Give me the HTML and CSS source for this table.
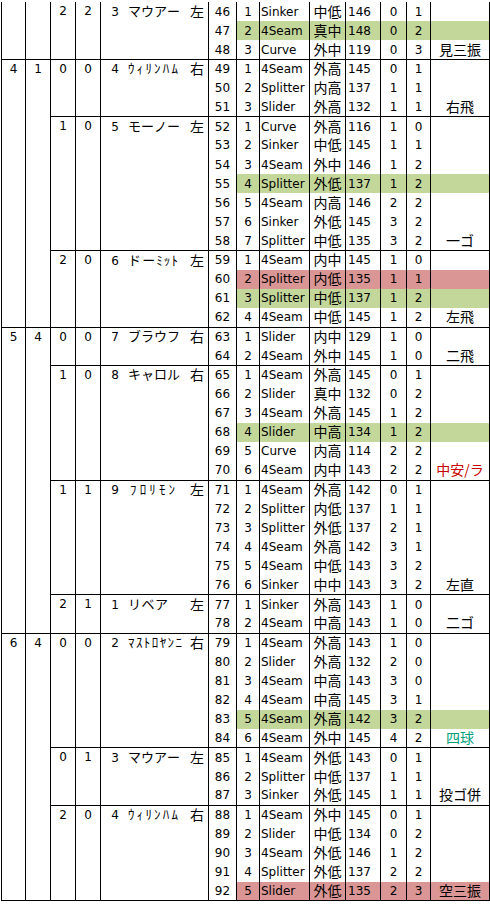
FILE: index.html
```html
<!DOCTYPE html>
<html lang="ja">
<head>
<meta charset="utf-8">
<title>投球記録</title>
<link rel="stylesheet" href="styles.css">
</head>
<body>
<table class="log">
<colgroup>
<col class="w-inn"><col class="w-inn2"><col class="w-c"><col class="w-c"><col class="w-bat"><col class="w-no"><col class="w-pn"><col class="w-pt"><col class="w-zn"><col class="w-sp"><col class="w-bc"><col class="w-sc"><col class="w-rs">
</colgroup>
<tbody>
<tr class="ab first">
<td class="inn" rowspan="3"></td><td class="inn" rowspan="3"></td>
<td class="c" rowspan="3">2</td><td class="c" rowspan="3">2</td>
<td class="bat" rowspan="3"><div class="bw"><span class="bn">3</span><span class="nm"><i>マ</i><i>ウ</i><i>ア</i><i>ー</i></span><span class="hd">左</span></div></td>
<td class="no">46</td><td class="pn">1</td><td class="pt">Sinker</td><td class="zn">中低</td><td class="sp">146</td><td class="bc">0</td><td class="bc">1</td><td class="rs"></td>
</tr>
<tr class="g"><td class="no">47</td><td class="pn">2</td><td class="pt">4Seam</td><td class="zn">真中</td><td class="sp">148</td><td class="bc">0</td><td class="bc">2</td><td class="rs"></td></tr>
<tr><td class="no">48</td><td class="pn">3</td><td class="pt">Curve</td><td class="zn">外中</td><td class="sp">119</td><td class="bc">0</td><td class="bc">3</td><td class="rs">見三振</td></tr>

<tr class="ab">
<td class="inn" rowspan="14">4</td><td class="inn" rowspan="14">1</td>
<td class="c" rowspan="3">0</td><td class="c" rowspan="3">0</td>
<td class="bat" rowspan="3"><div class="bw"><span class="bn">4</span><span class="nm"><i>ｳ</i><i>ｨ</i><i>ﾘ</i><i>ﾝ</i><i>ﾊ</i><i>ﾑ</i></span><span class="hd">右</span></div></td>
<td class="no">49</td><td class="pn">1</td><td class="pt">4Seam</td><td class="zn">外高</td><td class="sp">145</td><td class="bc">0</td><td class="bc">1</td><td class="rs"></td>
</tr>
<tr><td class="no">50</td><td class="pn">2</td><td class="pt">Splitter</td><td class="zn">内高</td><td class="sp">137</td><td class="bc">1</td><td class="bc">1</td><td class="rs"></td></tr>
<tr><td class="no">51</td><td class="pn">3</td><td class="pt">Slider</td><td class="zn">外高</td><td class="sp">132</td><td class="bc">1</td><td class="bc">1</td><td class="rs">右飛</td></tr>

<tr class="ab">
<td class="c" rowspan="7">1</td><td class="c" rowspan="7">0</td>
<td class="bat" rowspan="7"><div class="bw"><span class="bn">5</span><span class="nm"><i>モ</i><i>ー</i><i>ノ</i><i>ー</i></span><span class="hd">左</span></div></td>
<td class="no">52</td><td class="pn">1</td><td class="pt">Curve</td><td class="zn">外高</td><td class="sp">116</td><td class="bc">1</td><td class="bc">0</td><td class="rs"></td>
</tr>
<tr><td class="no">53</td><td class="pn">2</td><td class="pt">Sinker</td><td class="zn">中低</td><td class="sp">145</td><td class="bc">1</td><td class="bc">1</td><td class="rs"></td></tr>
<tr><td class="no">54</td><td class="pn">3</td><td class="pt">4Seam</td><td class="zn">外中</td><td class="sp">146</td><td class="bc">1</td><td class="bc">2</td><td class="rs"></td></tr>
<tr class="g"><td class="no">55</td><td class="pn">4</td><td class="pt">Splitter</td><td class="zn">外低</td><td class="sp">137</td><td class="bc">1</td><td class="bc">2</td><td class="rs"></td></tr>
<tr><td class="no">56</td><td class="pn">5</td><td class="pt">4Seam</td><td class="zn">内高</td><td class="sp">146</td><td class="bc">2</td><td class="bc">2</td><td class="rs"></td></tr>
<tr><td class="no">57</td><td class="pn">6</td><td class="pt">Sinker</td><td class="zn">外低</td><td class="sp">145</td><td class="bc">3</td><td class="bc">2</td><td class="rs"></td></tr>
<tr><td class="no">58</td><td class="pn">7</td><td class="pt">Splitter</td><td class="zn">中低</td><td class="sp">135</td><td class="bc">3</td><td class="bc">2</td><td class="rs">一ゴ</td></tr>

<tr class="ab">
<td class="c" rowspan="4">2</td><td class="c" rowspan="4">0</td>
<td class="bat" rowspan="4"><div class="bw"><span class="bn">6</span><span class="nm"><i>ド</i><i>ー</i><i>ﾐ</i><i>ｯ</i><i>ﾄ</i></span><span class="hd">左</span></div></td>
<td class="no">59</td><td class="pn">1</td><td class="pt">4Seam</td><td class="zn">内中</td><td class="sp">145</td><td class="bc">1</td><td class="bc">0</td><td class="rs"></td>
</tr>
<tr class="r"><td class="no">60</td><td class="pn">2</td><td class="pt">Splitter</td><td class="zn">内低</td><td class="sp">135</td><td class="bc">1</td><td class="bc">1</td><td class="rs"></td></tr>
<tr class="g"><td class="no">61</td><td class="pn">3</td><td class="pt">Splitter</td><td class="zn">中低</td><td class="sp">137</td><td class="bc">1</td><td class="bc">2</td><td class="rs"></td></tr>
<tr><td class="no">62</td><td class="pn">4</td><td class="pt">4Seam</td><td class="zn">中低</td><td class="sp">145</td><td class="bc">1</td><td class="bc">2</td><td class="rs">左飛</td></tr>

<tr class="ab">
<td class="inn" rowspan="16">5</td><td class="inn" rowspan="16">4</td>
<td class="c" rowspan="2">0</td><td class="c" rowspan="2">0</td>
<td class="bat" rowspan="2"><div class="bw"><span class="bn">7</span><span class="nm"><i>ブ</i><i>ラ</i><i>ウ</i><i>フ</i></span><span class="hd">右</span></div></td>
<td class="no">63</td><td class="pn">1</td><td class="pt">Slider</td><td class="zn">内中</td><td class="sp">129</td><td class="bc">1</td><td class="bc">0</td><td class="rs"></td>
</tr>
<tr><td class="no">64</td><td class="pn">2</td><td class="pt">4Seam</td><td class="zn">外中</td><td class="sp">145</td><td class="bc">1</td><td class="bc">0</td><td class="rs">二飛</td></tr>

<tr class="ab">
<td class="c" rowspan="6">1</td><td class="c" rowspan="6">0</td>
<td class="bat" rowspan="6"><div class="bw"><span class="bn">8</span><span class="nm"><i>キ</i><i>ャ</i><i>ロ</i><i>ル</i></span><span class="hd">右</span></div></td>
<td class="no">65</td><td class="pn">1</td><td class="pt">4Seam</td><td class="zn">外高</td><td class="sp">145</td><td class="bc">0</td><td class="bc">1</td><td class="rs"></td>
</tr>
<tr><td class="no">66</td><td class="pn">2</td><td class="pt">Slider</td><td class="zn">真中</td><td class="sp">132</td><td class="bc">0</td><td class="bc">2</td><td class="rs"></td></tr>
<tr><td class="no">67</td><td class="pn">3</td><td class="pt">4Seam</td><td class="zn">外高</td><td class="sp">145</td><td class="bc">1</td><td class="bc">2</td><td class="rs"></td></tr>
<tr class="g"><td class="no">68</td><td class="pn">4</td><td class="pt">Slider</td><td class="zn">中高</td><td class="sp">134</td><td class="bc">1</td><td class="bc">2</td><td class="rs"></td></tr>
<tr><td class="no">69</td><td class="pn">5</td><td class="pt">Curve</td><td class="zn">内高</td><td class="sp">114</td><td class="bc">2</td><td class="bc">2</td><td class="rs"></td></tr>
<tr><td class="no">70</td><td class="pn">6</td><td class="pt">4Seam</td><td class="zn">内中</td><td class="sp">143</td><td class="bc">2</td><td class="bc">2</td><td class="rs hit">中安/ラ</td></tr>

<tr class="ab">
<td class="c" rowspan="6">1</td><td class="c" rowspan="6">1</td>
<td class="bat" rowspan="6"><div class="bw"><span class="bn">9</span><span class="nm nm-s"><i>ﾌ</i><i>ﾛ</i><i>ﾘ</i><i>ﾓ</i><i>ﾝ</i></span><span class="hd">左</span></div></td>
<td class="no">71</td><td class="pn">1</td><td class="pt">4Seam</td><td class="zn">外高</td><td class="sp">142</td><td class="bc">0</td><td class="bc">1</td><td class="rs"></td>
</tr>
<tr><td class="no">72</td><td class="pn">2</td><td class="pt">Splitter</td><td class="zn">内低</td><td class="sp">137</td><td class="bc">1</td><td class="bc">1</td><td class="rs"></td></tr>
<tr><td class="no">73</td><td class="pn">3</td><td class="pt">Splitter</td><td class="zn">外低</td><td class="sp">137</td><td class="bc">2</td><td class="bc">1</td><td class="rs"></td></tr>
<tr><td class="no">74</td><td class="pn">4</td><td class="pt">4Seam</td><td class="zn">外高</td><td class="sp">142</td><td class="bc">3</td><td class="bc">1</td><td class="rs"></td></tr>
<tr><td class="no">75</td><td class="pn">5</td><td class="pt">4Seam</td><td class="zn">中低</td><td class="sp">143</td><td class="bc">3</td><td class="bc">2</td><td class="rs"></td></tr>
<tr><td class="no">76</td><td class="pn">6</td><td class="pt">Sinker</td><td class="zn">中中</td><td class="sp">143</td><td class="bc">3</td><td class="bc">2</td><td class="rs">左直</td></tr>

<tr class="ab">
<td class="c" rowspan="2">2</td><td class="c" rowspan="2">1</td>
<td class="bat" rowspan="2"><div class="bw"><span class="bn">1</span><span class="nm nm-n"><i>リ</i><i>ベ</i><i>ア</i></span><span class="hd">左</span></div></td>
<td class="no">77</td><td class="pn">1</td><td class="pt">Sinker</td><td class="zn">外高</td><td class="sp">143</td><td class="bc">1</td><td class="bc">0</td><td class="rs"></td>
</tr>
<tr><td class="no">78</td><td class="pn">2</td><td class="pt">4Seam</td><td class="zn">中高</td><td class="sp">143</td><td class="bc">1</td><td class="bc">0</td><td class="rs">二ゴ</td></tr>

<tr class="ab">
<td class="inn" rowspan="14">6</td><td class="inn" rowspan="14">4</td>
<td class="c" rowspan="6">0</td><td class="c" rowspan="6">0</td>
<td class="bat" rowspan="6"><div class="bw"><span class="bn">2</span><span class="nm nm-w"><i>ﾏ</i><i>ｽ</i><i>ﾄ</i><i>ﾛ</i><i>ﾔ</i><i>ﾝ</i><i>ﾆ</i></span><span class="hd">右</span></div></td>
<td class="no">79</td><td class="pn">1</td><td class="pt">4Seam</td><td class="zn">外高</td><td class="sp">143</td><td class="bc">1</td><td class="bc">0</td><td class="rs"></td>
</tr>
<tr><td class="no">80</td><td class="pn">2</td><td class="pt">Slider</td><td class="zn">外高</td><td class="sp">132</td><td class="bc">2</td><td class="bc">0</td><td class="rs"></td></tr>
<tr><td class="no">81</td><td class="pn">3</td><td class="pt">4Seam</td><td class="zn">中高</td><td class="sp">143</td><td class="bc">3</td><td class="bc">0</td><td class="rs"></td></tr>
<tr><td class="no">82</td><td class="pn">4</td><td class="pt">4Seam</td><td class="zn">中高</td><td class="sp">145</td><td class="bc">3</td><td class="bc">1</td><td class="rs"></td></tr>
<tr class="g"><td class="no">83</td><td class="pn">5</td><td class="pt">4Seam</td><td class="zn">外高</td><td class="sp">142</td><td class="bc">3</td><td class="bc">2</td><td class="rs"></td></tr>
<tr><td class="no">84</td><td class="pn">6</td><td class="pt">4Seam</td><td class="zn">外中</td><td class="sp">145</td><td class="bc">4</td><td class="bc">2</td><td class="rs walk">四球</td></tr>

<tr class="ab">
<td class="c" rowspan="3">0</td><td class="c" rowspan="3">1</td>
<td class="bat" rowspan="3"><div class="bw"><span class="bn">3</span><span class="nm"><i>マ</i><i>ウ</i><i>ア</i><i>ー</i></span><span class="hd">左</span></div></td>
<td class="no">85</td><td class="pn">1</td><td class="pt">4Seam</td><td class="zn">外低</td><td class="sp">143</td><td class="bc">0</td><td class="bc">1</td><td class="rs"></td>
</tr>
<tr><td class="no">86</td><td class="pn">2</td><td class="pt">Splitter</td><td class="zn">中低</td><td class="sp">137</td><td class="bc">1</td><td class="bc">1</td><td class="rs"></td></tr>
<tr><td class="no">87</td><td class="pn">3</td><td class="pt">Sinker</td><td class="zn">外低</td><td class="sp">145</td><td class="bc">1</td><td class="bc">1</td><td class="rs">投ゴ併</td></tr>

<tr class="ab">
<td class="c" rowspan="5">2</td><td class="c" rowspan="5">0</td>
<td class="bat" rowspan="5"><div class="bw"><span class="bn">4</span><span class="nm"><i>ｳ</i><i>ｨ</i><i>ﾘ</i><i>ﾝ</i><i>ﾊ</i><i>ﾑ</i></span><span class="hd">右</span></div></td>
<td class="no">88</td><td class="pn">1</td><td class="pt">4Seam</td><td class="zn">外中</td><td class="sp">145</td><td class="bc">0</td><td class="bc">1</td><td class="rs"></td>
</tr>
<tr><td class="no">89</td><td class="pn">2</td><td class="pt">Slider</td><td class="zn">中低</td><td class="sp">134</td><td class="bc">0</td><td class="bc">2</td><td class="rs"></td></tr>
<tr><td class="no">90</td><td class="pn">3</td><td class="pt">4Seam</td><td class="zn">外低</td><td class="sp">146</td><td class="bc">1</td><td class="bc">2</td><td class="rs"></td></tr>
<tr><td class="no">91</td><td class="pn">4</td><td class="pt">Splitter</td><td class="zn">外低</td><td class="sp">137</td><td class="bc">2</td><td class="bc">2</td><td class="rs"></td></tr>
<tr class="r"><td class="no">92</td><td class="pn">5</td><td class="pt">Slider</td><td class="zn">外低</td><td class="sp">135</td><td class="bc">2</td><td class="bc">3</td><td class="rs">空三振</td></tr>
</tbody>
</table>
</body>
</html>
```
FILE: styles.css
```css
html, body {
  margin: 0;
  padding: 0;
  background: #ffffff;
}

.log {
  border-collapse: collapse;
  table-layout: fixed;
  width: 489px;
  margin: 2px 0 0 1px;
  font-family: "DejaVu Sans", "Noto Sans CJK JP", sans-serif;
  font-size: 12px;
  color: #000;
  border-bottom: 1px solid #000;
}

.w-inn { width: 24px; }
.w-inn2 { width: 25px; }
.w-c { width: 25px; }
.w-bat { width: 108px; }
.w-no { width: 28px; }
.w-pn { width: 23px; }
.w-pt { width: 50px; }
.w-zn { width: 36px; }
.w-sp { width: 35px; }
.w-bc { width: 26px; }
.w-sc { width: 24px; }
.w-rs { width: 59px; }

.log tr {
  height: 19.13px;
}

.log td {
  padding: 0;
  border-left: 1px solid #000;
  border-right: 1px solid #000;
  line-height: 18px;
  white-space: nowrap;
  vertical-align: middle;
}

.log tr.ab > td {
  border-top: 1px solid #000;
}

.log tr.first > td {
  border-top: none;
}

.log td.inn,
.log td.c,
.log td.bat {
  vertical-align: top;
}

.inn,
.c,
.no,
.pn,
.bc {
  text-align: center;
}

.log td.pt {
  padding-left: 1px;
}

.log td.sp {
  padding-left: 2px;
}

.log td.zn,
.log td.rs {
  text-align: center;
  font-family: "Noto Sans CJK JP", sans-serif;
  font-size: 14px;
  line-height: 16px;
  padding-bottom: 2px;
}

.hit {
  color: #c80000;
}

.walk {
  color: #00a07c;
}

.g td:nth-last-child(-n+7) {
  background: #c4d79b;
}

.r td:nth-last-child(-n+7) {
  background: #da9694;
}

.bw {
  display: flex;
  align-items: center;
  height: 19px;
}

.bn {
  width: 12px;
  margin-left: 8px;
  text-align: center;
}

.nm {
  display: flex;
  justify-content: space-between;
  width: 50px;
  margin-left: 7px;
  margin-bottom: 2px;
  font-family: "Noto Sans CJK JP", sans-serif;
  font-size: 13px;
  line-height: 16px;
}

.nm i {
  font-style: normal;
}

.nm-s {
  width: 45px;
  margin-left: 9px;
}

.nm-n {
  width: 40px;
}

.nm-w {
  width: 54px;
}

.hd {
  margin-left: auto;
  margin-right: 4px;
  margin-bottom: 2px;
  font-family: "Noto Sans CJK JP", sans-serif;
  font-size: 14px;
  line-height: 16px;
}
```
